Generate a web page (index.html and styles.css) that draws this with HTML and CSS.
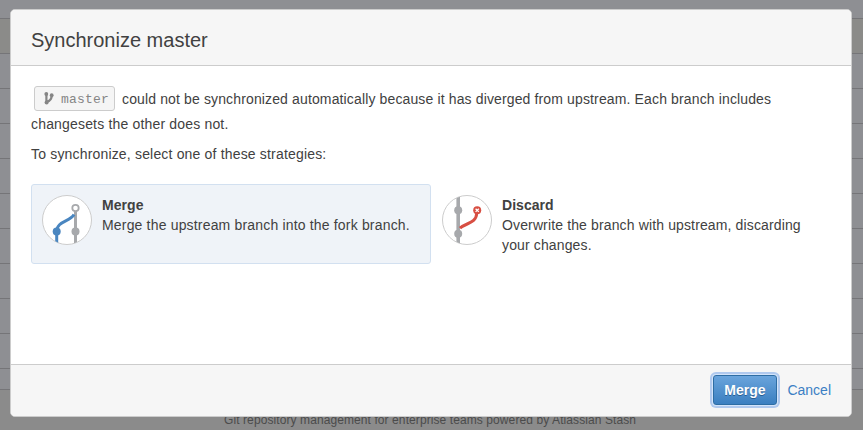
FILE: index.html
```html
<!DOCTYPE html>
<html lang="en">
<head>
<meta charset="utf-8">
<title>Synchronize master</title>
<link rel="stylesheet" href="styles.css">
</head>
<body>
<div class="page">
  <div class="rows">
    <div class="row row-first"></div>
    <div class="row row-head"></div>
    <div class="row"></div><div class="row"></div><div class="row"></div>
    <div class="row"></div><div class="row"></div><div class="row"></div>
    <div class="row"></div><div class="row"></div><div class="row"></div>
    <div class="row row-last"></div>
  </div>
  <footer class="page-footer"><span class="credit">Git repository management for enterprise teams powered by Atlassian Stash</span></footer>
</div>
<section class="dialog" role="dialog">
  <header class="dialog-header"><h1 class="title">Synchronize master</h1></header>
  <div class="dialog-body">
    <div class="message">
      <div class="message-line"><span class="branch"><svg class="branch-icon" width="10" height="13" viewBox="0 0 10 13"><path d="M2.4 2v8.5M2.7 9.9C6.2 9 7.8 7.5 7.8 3" fill="none" stroke="#858585" stroke-width="2.2"/><circle cx="2.3" cy="2" r="1.9" fill="#858585"/><circle cx="2.6" cy="10.6" r="2" fill="#858585"/><circle cx="7.7" cy="3.2" r="1.9" fill="#858585"/></svg><span class="branch-name">master</span></span><span class="reason">could not be synchronized automatically because it has diverged from upstream. Each branch includes</span></div>
      <div>changesets the other does not.</div>
    </div>
    <p class="prompt">To synchronize, select one of these strategies:</p>
    <div class="strategies">
      <div class="strategy selected">
        <svg class="strategy-icon" width="50" height="50" viewBox="0 0 50 50">
          <defs><clipPath id="disc"><circle cx="25" cy="25" r="24.3"/></clipPath></defs>
          <circle cx="25" cy="25" r="24.5" fill="#fff" stroke="#ccc"/>
          <g clip-path="url(#disc)" fill="none" stroke-width="3">
            <path d="M33.5 16v34" stroke="#a7a9ac"/>
            <path d="M14.7 50V36.5C14.7 26 28 27 32 19.5" stroke="#4a86c0"/>
          </g>
          <circle cx="14.7" cy="36.5" r="4" fill="#4a86c0"/>
          <circle cx="33.5" cy="36.5" r="4" fill="#a7a9ac"/>
          <circle cx="33.5" cy="13" r="3.2" fill="#fff" stroke="#a7a9ac" stroke-width="1.8"/>
        </svg>
        <div class="strategy-text"><strong>Merge</strong><span>Merge the upstream branch into the fork branch.</span></div>
      </div>
      <div class="strategy">
        <svg class="strategy-icon" width="50" height="50" viewBox="0 0 50 50">
          <circle cx="25" cy="25" r="24.5" fill="#fff" stroke="#ccc"/>
          <g clip-path="url(#disc)" fill="none" stroke-width="3">
            <path d="M16.2 0v50" stroke="#a7a9ac" stroke-width="3.6"/>
            <path d="M18 33.2C24 27.5 34 29 34.8 18" stroke="#d84f43"/>
          </g>
          <circle cx="16.2" cy="15.3" r="4" fill="#a7a9ac"/>
          <circle cx="16.2" cy="38.8" r="4" fill="#a7a9ac"/>
          <circle cx="35.2" cy="15.3" r="4" fill="#d84f43"/>
          <path d="M33.6 13.7l3.2 3.2m0-3.2l-3.2 3.2" stroke="#fff" stroke-width="1.3"/>
        </svg>
        <div class="strategy-text"><strong>Discard</strong><span class="reason">Overwrite the branch with upstream, discarding<br>your changes.</span></div>
      </div>
    </div>
  </div>
  <footer class="dialog-footer"><button class="primary" type="button">Merge</button><a class="cancel">Cancel</a></footer>
</section>
</body>
</html>
```
FILE: styles.css
```css
* { box-sizing: border-box; }
body { margin: 0; width: 863px; height: 430px; overflow: hidden; position: relative; font-family: "Liberation Sans", Arial, sans-serif; font-size: 14px; color: #414141; background: #8b8b8b; }
.row { height: 35px; border-bottom: 1px solid #757578; background: #8e8f93; }
.row-first { height: 19px; }
.row-head { background: #8b8b89; }
.row-last { height: 21px; }
.page-footer { padding: 22px 0 0 224px; font-size: 12px; line-height: 16px; color: #4b4b4b; white-space: nowrap; }
.credit { letter-spacing: 0.09px; }
.dialog { position: absolute; left: 10px; top: 9px; width: 842px; height: 408px; display: flex; flex-direction: column; border: 1px solid #ccc; border-radius: 5px; background: #fff; overflow: hidden; }
.dialog-header { height: 56px; padding: 15px 20px; background: #f6f6f6; border-bottom: 1px solid #ccc; }
.title { margin: 0; font-size: 20px; line-height: 30px; font-weight: 400; }
.dialog-body { flex: 1; padding: 20px; white-space: nowrap; letter-spacing: 0.175px; }
.message { line-height: 25px; }
.message-line { display: flex; align-items: center; height: 26px; }
.reason { letter-spacing: 0.135px; }
.branch { display: flex; align-items: center; height: 25px; width: 81px; margin: -1px 7px 0 3px; padding-left: 9px; border: 1px solid #ccc; border-radius: 3px; background: #f5f5f5; color: #858585; }
.branch-icon { margin-right: 7px; }
.branch-name { font-family: "Liberation Mono", monospace; font-size: 13px; line-height: 23px; padding-top: 2px; }
.prompt { margin: 5px 0 0; line-height: 25px; }
.strategies { display: flex; margin-top: 17px; }
.strategy { display: flex; gap: 10px; width: 400px; height: 80px; padding: 10px; border: 1px solid transparent; border-radius: 3px; line-height: 20px; }
.selected { background: #eff3f8; border-color: #d2e0f0; }
.strategy-icon { flex: none; }
.strategy-text { display: flex; flex-direction: column; }
.strategy-text strong { letter-spacing: 0.05px; }
.dialog-footer { height: 52px; display: flex; align-items: center; justify-content: flex-end; gap: 10px; padding: 0 20px 1px; background: #f6f6f6; border-top: 1px solid #ccc; }
.primary { width: 64px; height: 30px; padding: 0 1px 0 0; border: 1px solid #2e6da4; border-radius: 3px; background: linear-gradient(#6aa4dc, #3b7fc0); box-shadow: 0 0 0 1px #d4e4fa, 0 0 0 3px #b0c9ee; color: #fff; font: bold 14px "Liberation Sans", sans-serif; text-shadow: 0 1px 0 #285c91; }
.cancel { color: #3b7fc4; }
```
